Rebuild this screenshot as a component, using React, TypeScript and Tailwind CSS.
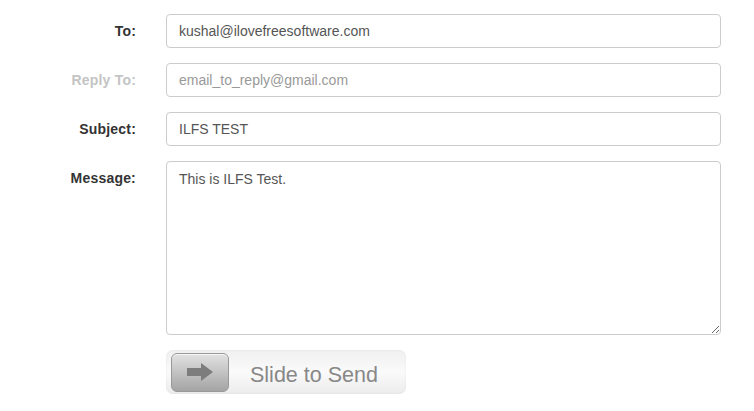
import React, { useState } from 'react';

const Row: React.FC<{ label: string; muted?: boolean; children: React.ReactNode; top?: boolean }> = ({ label, muted, children, top }) => (
  <div className={`flex gap-[30px] ${top ? 'items-start' : 'items-center'}`}>
    <label
      className={`w-[136px] shrink-0 text-right text-[14px] font-bold tracking-[0.2px] ${muted ? 'text-[#c4c4c4]' : 'text-[#333]'} ${top ? 'pt-[7px]' : 'pt-[1px]'}`}
    >
      {label}
    </label>
    {children}
  </div>
);

const inputCls =
  'w-[555px] h-[34px] px-[12px] border border-[#ccc] rounded-[4px] bg-white text-[14px] text-[#555] placeholder:text-[#999] outline-none';

export default function App() {
  const [to, setTo] = useState('kushal@ilovefreesoftware.com');
  const [replyTo, setReplyTo] = useState('');
  const [subject, setSubject] = useState('ILFS TEST');
  const [message, setMessage] = useState('This is ILFS Test.');

  return (
    <div className="w-[754px] h-[411px] bg-white pt-[14px] font-['Liberation_Sans',Arial,sans-serif]">
      <div className="flex flex-col gap-[15px]">
        <Row label="To:">
          <input className={inputCls} value={to} onChange={(e) => setTo(e.target.value)} />
        </Row>
        <Row label="Reply To:" muted>
          <input
            className={inputCls}
            placeholder="email_to_reply@gmail.com"
            value={replyTo}
            onChange={(e) => setReplyTo(e.target.value)}
          />
        </Row>
        <Row label="Subject:">
          <input className={inputCls} value={subject} onChange={(e) => setSubject(e.target.value)} />
        </Row>
        <Row label="Message:" top>
          <textarea
            className="w-[555px] h-[174px] px-[12px] py-[7px] border border-[#ccc] rounded-[4px] bg-white text-[14px] leading-[20px] text-[#555] outline-none resize"
            value={message}
            spellCheck
            onChange={(e) => setMessage(e.target.value)}
          />
        </Row>
      </div>

      {/* slide to send */}
      <div className="ml-[166px] mt-[15px] w-[240px] h-[44px] rounded-[7px] bg-gradient-to-b from-[#f0f0f0] via-[#fafafa] to-[#ececec] shadow-[inset_0_0_2px_rgba(0,0,0,0.08)] flex items-center pl-[5px]">
        <button className="w-[58px] h-[39px] rounded-[6px] border border-[#999] bg-gradient-to-b from-[#e2e2e2] to-[#a4a4a4] flex items-center justify-center shadow-[inset_0_1px_0_rgba(255,255,255,0.7)]">
          <svg width="28" height="18" viewBox="0 0 28 18">
            <path d="M1 5h14V0l12 9-12 9v-5H1z" fill="#7d7d7d" />
          </svg>
        </button>
        <span className="ml-[21px] pt-[6px] text-[21.5px] text-[#888]">Slide to Send</span>
      </div>
    </div>
  );
}
